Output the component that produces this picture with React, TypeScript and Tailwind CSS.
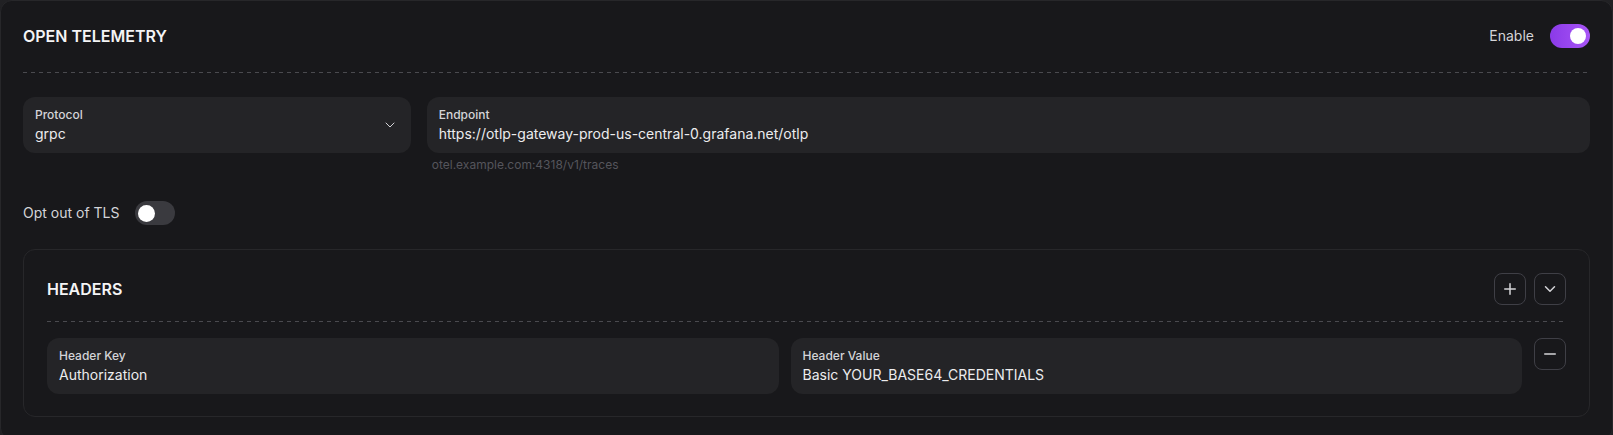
import { ChevronDown, Minus, Plus } from "lucide-react"

function Toggle({ on }: { on: boolean }) {
  return (
    <button
      className={
        on
          ? "relative h-6 w-10 shrink-0 rounded-full bg-[linear-gradient(to_right,#8b3ae8,#a855f7)]"
          : "relative h-6 w-10 shrink-0 rounded-full bg-[#3a3a3f]"
      }
    >
      <span
        className={
          on
            ? "absolute right-[4px] top-[4px] size-4 rounded-full bg-white"
            : "absolute left-[3px] top-[3.5px] size-[17px] rounded-full bg-white"
        }
      />
    </button>
  )
}

function Field({ label, value, select }: { label: string; value: string; select?: boolean }) {
  return (
    <div className="flex h-14 items-center justify-between rounded-xl bg-[#242427] pl-3 pr-[13px]">
      <div className="flex flex-col">
        <span className="text-xs leading-4 font-medium text-[#d4d4d8]">{label}</span>
        <span className="mt-[1px] text-sm leading-5 text-[#ececee]">{value}</span>
      </div>
      {select && <ChevronDown size={16} strokeWidth={1.5} className="text-[#d4d4d8]" />}
    </div>
  )
}

function IconButton({ children }: { children: React.ReactNode }) {
  return (
    <button className="flex size-8 shrink-0 items-center justify-center rounded-lg border border-[#3f3f46] text-[#d4d4d8]">
      {children}
    </button>
  )
}

function Dashed() {
  return <div className="h-px w-full bg-[linear-gradient(to_right,#4a4a4f_50%,transparent_50%)] bg-[length:8px_1px]" />
}

export default function App() {
  return (
    <div className="min-h-screen bg-[#212124] font-['Inter',sans-serif]">
      <div className="rounded-xl border border-[#27272a] bg-[#18181b] px-[22px] pt-[23px] pb-[22px]">
        <div className="flex h-6 items-center justify-between">
          <h2 className="text-base leading-6 font-semibold text-[#f4f4f5]">OPEN TELEMETRY</h2>
          <div className="flex items-center gap-4">
            <span className="text-sm text-[#d4d4d8]">Enable</span>
            <Toggle on />
          </div>
        </div>

        <div className="mt-6">
          <Dashed />
        </div>

        <div className="mt-6 grid grid-cols-[1fr_3fr] gap-4">
          <div>
            <Field label="Protocol" value="grpc" select />
          </div>
          <div>
            <Field label="Endpoint" value="https://otlp-gateway-prod-us-central-0.grafana.net/otlp" />
            <p className="mt-1 ml-[5px] text-xs leading-4 text-[#55555c]">otel.example.com:4318/v1/traces</p>
          </div>
        </div>

        <div className="mt-7 flex items-center gap-4">
          <span className="text-sm text-[#d4d4d8]">Opt out of TLS</span>
          <Toggle on={false} />
        </div>

        <div className="mt-6 rounded-xl border border-[#27272a] bg-[#18181b] px-[23px] pt-[23px] pb-[22px]">
          <div className="flex h-8 items-center justify-between">
            <h3 className="text-base font-semibold text-[#f4f4f5]">HEADERS</h3>
            <div className="flex items-center gap-2">
              <IconButton>
                <Plus size={18} strokeWidth={2} />
              </IconButton>
              <IconButton>
                <ChevronDown size={18} strokeWidth={2} />
              </IconButton>
            </div>
          </div>

          <div className="mt-4">
            <Dashed />
          </div>

          <div className="mt-4 flex items-start gap-3">
            <div className="flex-1">
              <Field label="Header Key" value="Authorization" />
            </div>
            <div className="flex-1">
              <Field label="Header Value" value="Basic YOUR_BASE64_CREDENTIALS" />
            </div>
            <IconButton>
              <Minus size={18} strokeWidth={2} />
            </IconButton>
          </div>
        </div>
      </div>
    </div>
  )
}
